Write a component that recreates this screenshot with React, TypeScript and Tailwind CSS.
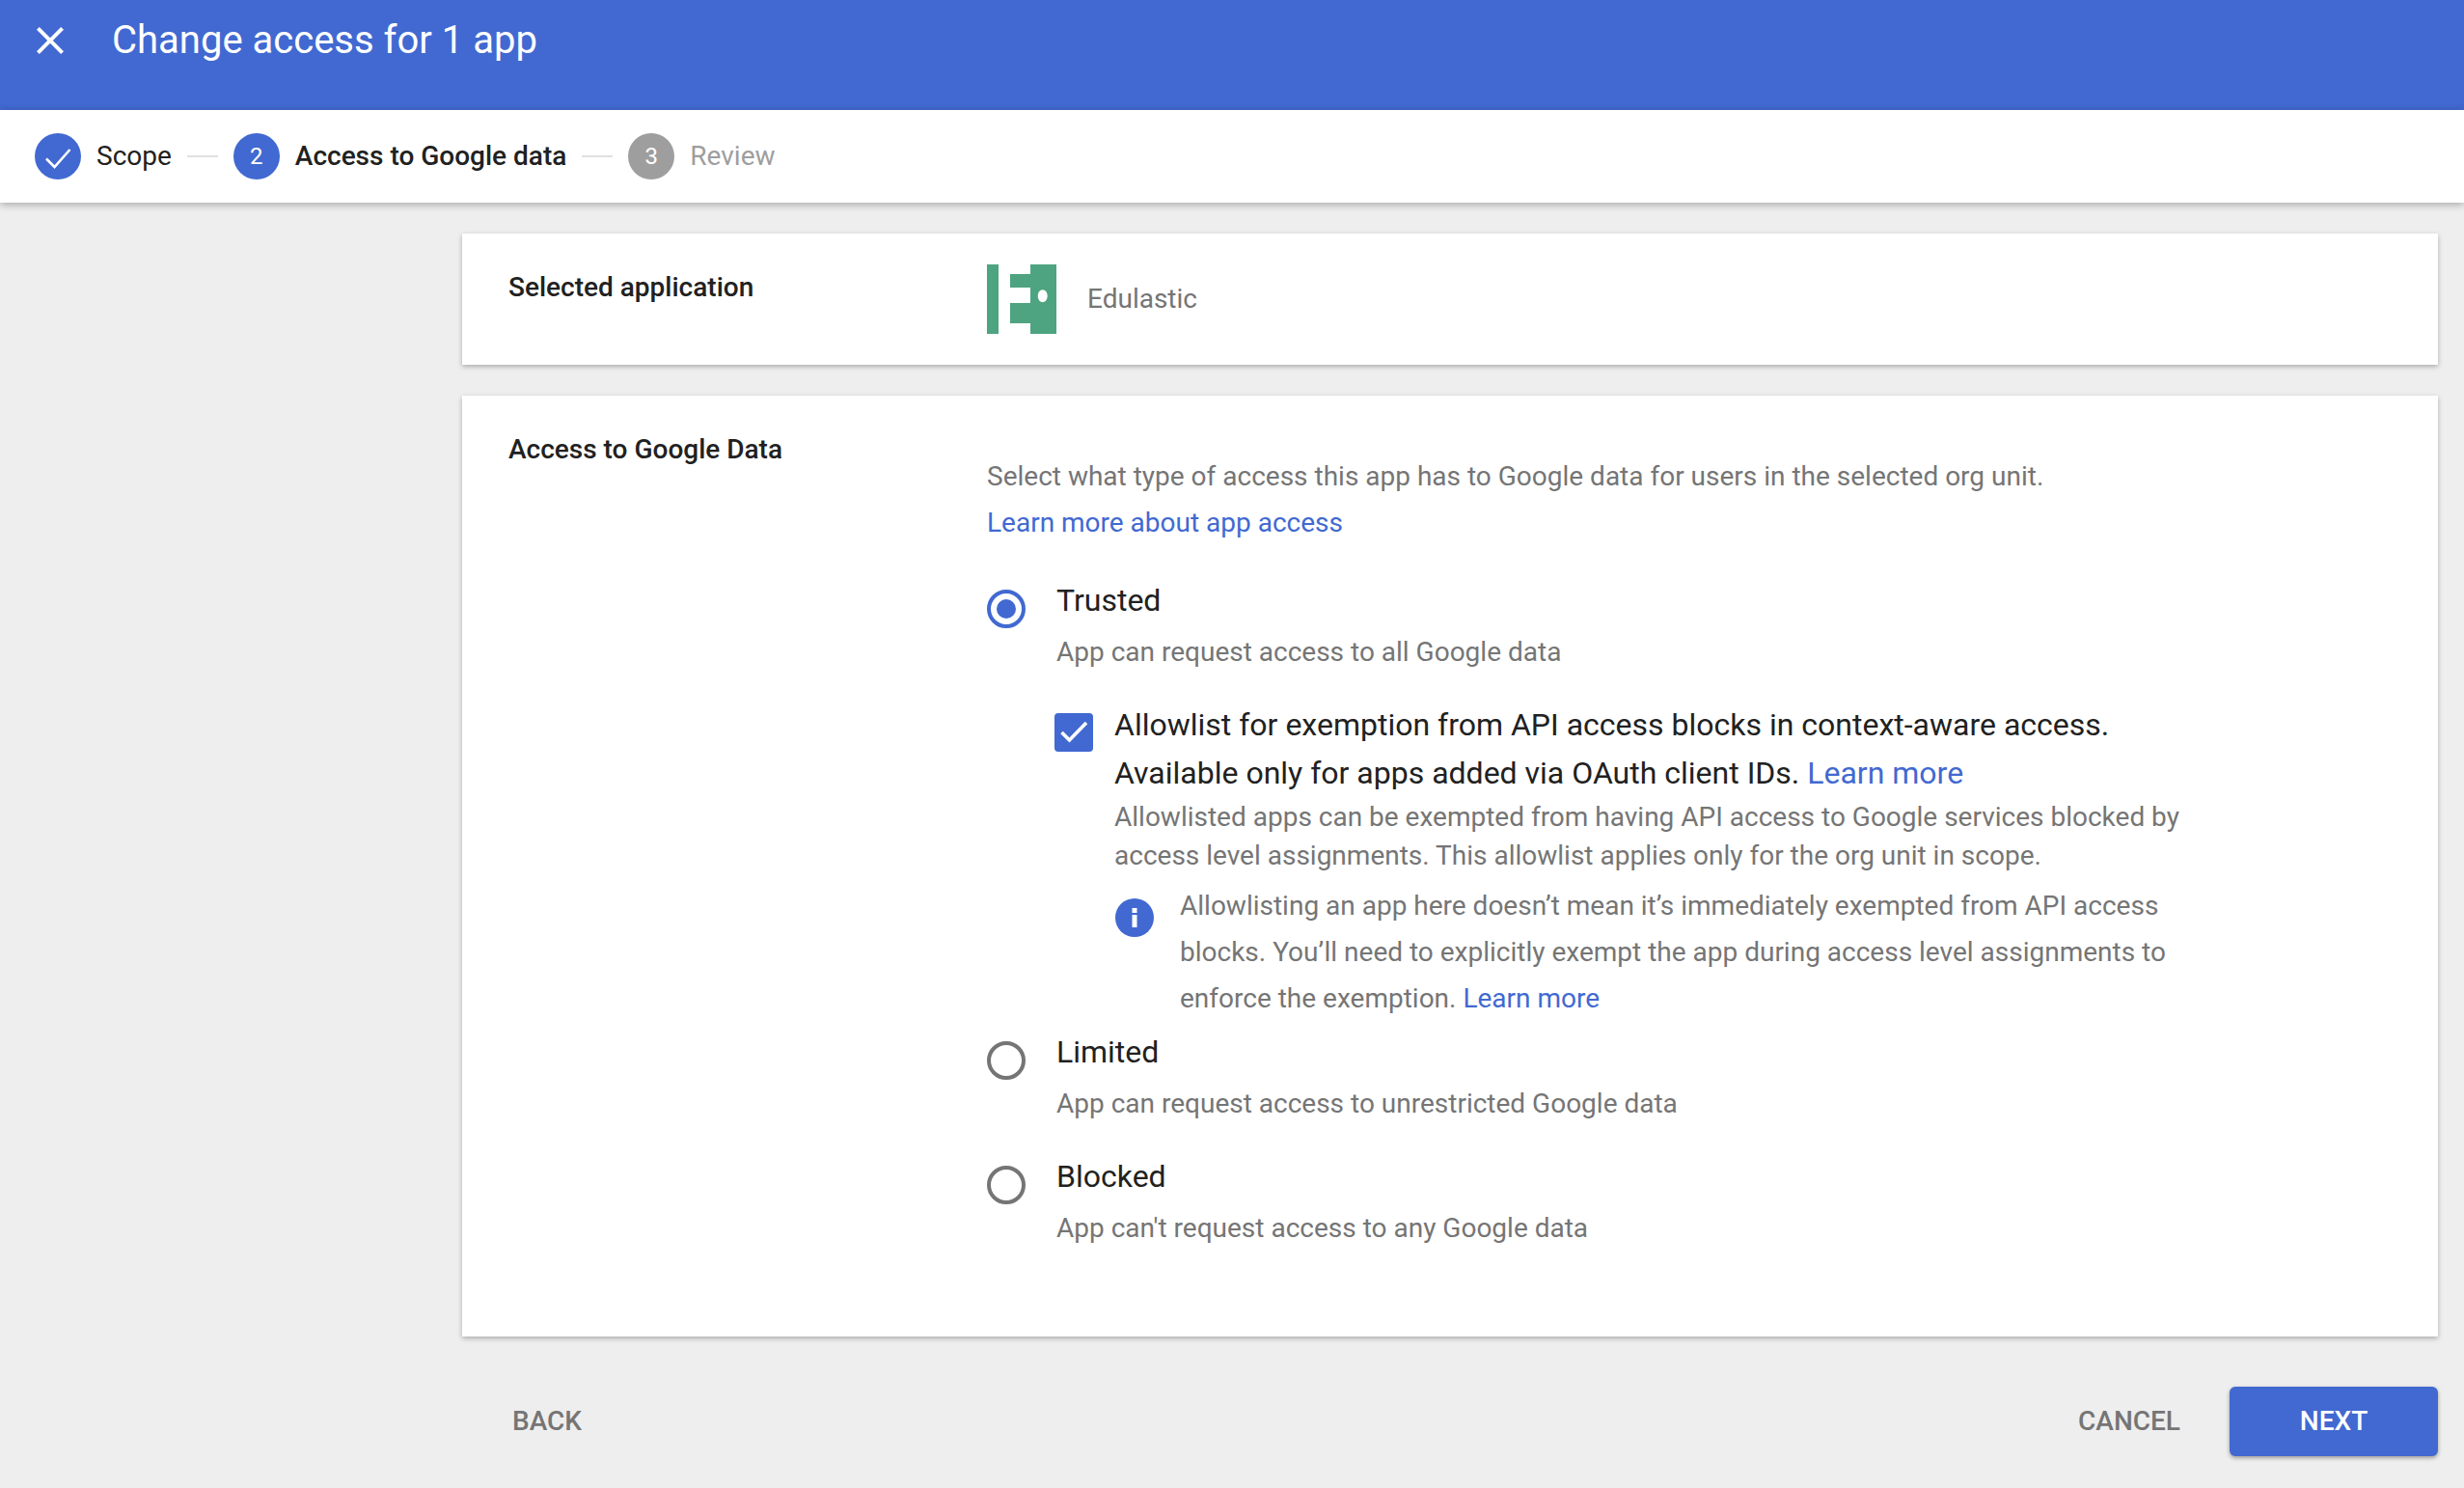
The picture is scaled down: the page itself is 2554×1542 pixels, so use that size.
const Radio = ({ checked = false }: { checked?: boolean }) => (
  <span
    className={`mt-[11px] flex h-[40px] w-[40px] shrink-0 items-center justify-center rounded-full border-[4px] ${
      checked ? "border-[#4169d1]" : "border-[#757575]"
    }`}
  >
    {checked && <span className="h-[20px] w-[20px] rounded-full bg-[#4169d1]" />}
  </span>
);

const Step = ({ n, label, state }: { n: number; label: string; state: "done" | "active" | "todo" }) => (
  <div className="flex items-center gap-[16px]">
    <span
      className={`flex h-[48px] w-[48px] items-center justify-center rounded-full text-[24px] text-white ${
        state === "todo" ? "bg-[#9e9e9e]" : "bg-[#4169d1]"
      }`}
    >
      {state === "done" ? (
        <svg viewBox="0 0 48 48" className="h-[48px] w-[48px]" fill="none" stroke="#fff" strokeWidth="2.6">
          <path d="M12 26.5l8.5 8.5L36.5 17" />
        </svg>
      ) : (
        n
      )}
    </span>
    <span
      className={`text-[28px] ${
        state === "active" ? "font-medium text-[#212121]" : state === "done" ? "text-[#212121]" : "text-[#9e9e9e]"
      }`}
    >
      {label}
    </span>
  </div>
);

const StepLine = () => <span className="mx-[16px] h-[2px] w-[32px] bg-[#e0e0e0]" />;

const Option = ({ title, sub, checked, mt }: { title: string; sub: string; checked?: boolean; mt: string }) => (
  <div className={`flex gap-[32px] ${mt}`}>
    <Radio checked={checked} />
    <div>
      <div className="text-[32px] leading-[44px] text-[#212121]">{title}</div>
      <div className="mt-[12px] text-[28px] leading-[40px] text-[#757575]">{sub}</div>
    </div>
  </div>
);

export default function App() {
  return (
    <div className="min-h-screen bg-[#eeeeee] font-['Roboto',sans-serif]">
      <header className="flex h-[114px] items-start bg-[#4169d1] pl-[28px] pt-[18px] text-white">
        <svg viewBox="0 0 24 24" className="h-[48px] w-[48px]" fill="#fff">
          <path d="M19 6.41L17.59 5 12 10.59 6.41 5 5 6.41 10.59 12 5 17.59 6.41 19 12 13.41 17.59 19 19 17.59 13.41 12z" />
        </svg>
        <h1 className="ml-[40px] text-[40px] leading-[48px]">Change access for 1 app</h1>
      </header>

      <nav className="relative flex h-[96px] items-center bg-white pl-[36px] shadow-[0_2px_8px_rgba(0,0,0,0.3)]">
        <Step n={1} label="Scope" state="done" />
        <StepLine />
        <Step n={2} label="Access to Google data" state="active" />
        <StepLine />
        <Step n={3} label="Review" state="todo" />
      </nav>

      <main className="pl-[479px] pr-[27px] pt-[32px]">
        <section className="flex h-[136px] bg-white pl-[48px] shadow-[0_2px_5px_rgba(0,0,0,0.28)]">
          <div className="w-[496px] pt-[36px] text-[28px] font-medium leading-[40px] text-[#212121]">
            Selected application
          </div>
          <div className="flex items-center">
            <svg viewBox="0 0 72 72" className="h-[72px] w-[72px]" fill="#4ea480">
              <rect x="0" y="0" width="12" height="72" />
              <path d="M45 0H72V72H45V61H24V40H45V24H24V10H45Z" />
              <ellipse cx="57.7" cy="32.7" rx="5" ry="6.5" fill="#fff" />
            </svg>
            <span className="ml-[32px] text-[28px] text-[#757575]">Edulastic</span>
          </div>
        </section>

        <section className="mt-[32px] flex h-[975px] bg-white pl-[48px] shadow-[0_2px_5px_rgba(0,0,0,0.28)]">
          <div className="w-[496px] pt-[36px] text-[28px] font-medium leading-[40px] text-[#212121]">
            Access to Google Data
          </div>
          <div className="pt-[60px]">
            <p className="text-[28px] leading-[48px] text-[#757575]">
              Select what type of access this app has to Google data for users in the selected org unit.
            </p>
            <a className="block text-[28px] leading-[48px] text-[#4169d1]">Learn more about app access</a>

            <Option mt="mt-[34px]" checked title="Trusted" sub="App can request access to all Google data" />

            <div className="ml-[70px] mt-[30px] flex gap-[22px]">
              <span className="mt-[13px] h-[40px] w-[40px] shrink-0 rounded-[4px] bg-[#4169d1]">
                <svg viewBox="0 0 40 40" className="h-[40px] w-[40px]" fill="none" stroke="#fff" strokeWidth="3.6">
                  <path d="M7.5 20l8 8L33 10" />
                </svg>
              </span>
              <div>
                <div className="w-[1100px] text-[32px] leading-[50px] text-[#212121]">
                  Allowlist for exemption from API access blocks in context-aware access. Available only for apps added via
                  OAuth client IDs. <a className="text-[#4169d1]">Learn more</a>
                </div>
                <p className="mt-[1px] w-[1150px] text-[28px] leading-[40px] text-[#757575]">
                  Allowlisted apps can be exempted from having API access to Google services blocked by access level
                  assignments. This allowlist applies only for the org unit in scope.
                </p>
                <div className="mt-[8px] flex">
                  <span className="ml-[1px] mt-[16px] h-[40px] w-[40px] shrink-0 rounded-full bg-[#4169d1]">
                    <svg viewBox="0 0 40 40" className="h-[40px] w-[40px]" fill="#fff">
                      <rect x="17.5" y="10" width="5" height="5" />
                      <rect x="17.5" y="17" width="5" height="13" />
                    </svg>
                  </span>
                  <p className="ml-[27px] w-[1060px] text-[28px] leading-[48px] text-[#757575]">
                    Allowlisting an app here doesn&rsquo;t mean it&rsquo;s immediately exempted from API access blocks. You&rsquo;ll
                    need to explicitly exempt the app during access level assignments to enforce the exemption.{" "}
                    <a className="text-[#4169d1]">Learn more</a>
                  </p>
                </div>
              </div>
            </div>

            <Option mt="mt-[9px]" title="Limited" sub="App can request access to unrestricted Google data" />
            <Option mt="mt-[33px]" title="Blocked" sub="App can't request access to any Google data" />
          </div>
        </section>

        <footer className="mt-[52px] flex items-center pl-[52px]">
          <button className="text-[28px] font-medium text-[#757575]">BACK</button>
          <button className="ml-auto mr-[51px] text-[28px] font-medium text-[#757575]">CANCEL</button>
          <button className="h-[72px] w-[216px] rounded-[6px] bg-[#4169d1] text-[28px] font-medium text-white shadow-[0_2px_4px_rgba(0,0,0,0.35)]">
            NEXT
          </button>
        </footer>
      </main>
    </div>
  );
}
